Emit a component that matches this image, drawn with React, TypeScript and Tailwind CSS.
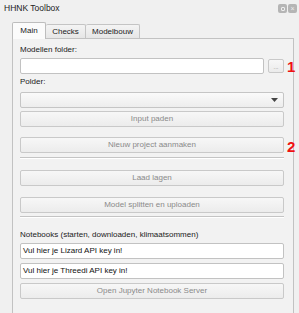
import React from "react";

const font = { fontFamily: '"Liberation Sans", Arial, sans-serif' };

function Btn({ label }: { label: string }) {
  return (
    <div className="h-[16px] flex items-center justify-center rounded-[2px] border border-[#c9c9c9] bg-gradient-to-b from-[#f7f7f7] to-[#ececec] text-[8px] text-[#8a8a8a]">
      {label}
    </div>
  );
}

function Input({ value }: { value?: string }) {
  return (
    <div className="h-[16px] flex items-center rounded-[2px] border border-[#c2c2c2] bg-white px-[2px] text-[8px] text-[#111]">
      {value}
    </div>
  );
}

export default function App() {
  return (
    <div className="relative w-[299px] h-[313px] overflow-hidden bg-[#f0f0f0] text-[#1a1a1a]" style={font}>
      {/* title bar */}
      <div className="flex h-[16px] items-center justify-between pl-[4px] pr-[2px] pt-[1px]">
        <span className="text-[8.5px] text-[#222]">HHNK Toolbox</span>
        <div className="flex gap-[1px]">
          <div className="w-[9px] h-[9px] rounded-[2px] bg-[#b5b5b5] flex items-center justify-center">
            <div className="w-[4px] h-[4px] border border-[#eee] rounded-[1px]" />
          </div>
          <div className="w-[9px] h-[9px] rounded-[2px] bg-[#b5b5b5] flex items-center justify-center text-[7px] leading-none text-[#eee]">
            ×
          </div>
        </div>
      </div>

      {/* tabs */}
      <div className="pl-[12px] pr-[5px] pt-[6px]">
        <div className="flex items-end h-[16px] text-[8px]">
          <div className="relative z-10 h-[17px] w-[34px] -mb-[1px] flex items-center justify-center rounded-t-[2px] border border-b-0 border-[#bdbdbd] bg-[#fbfbfb] pb-[1px]">
            Main
          </div>
          <div className="h-[14px] w-[40px] flex items-center justify-center rounded-t-[2px] border border-l-0 border-b-0 border-[#c4c4c4] bg-gradient-to-b from-[#f4f4f4] to-[#e6e6e6]">
            Checks
          </div>
          <div className="h-[14px] w-[54px] flex items-center justify-center rounded-t-[2px] border border-l-0 border-b-0 border-[#c4c4c4] bg-gradient-to-b from-[#f4f4f4] to-[#e6e6e6]">
            Modelbouw
          </div>
        </div>

        {/* panel */}
        <div className="h-[300px] border border-[#c2c2c2] bg-[#f2f2f2] pl-[7px] pr-[9px] pt-[5px] text-[8px]">
          <div className="h-[12px] leading-[12px]">Modellen folder:</div>
          <div className="mt-[2px] flex gap-[4px]">
            <div className="flex-1">
              <Input />
            </div>
            <div className="w-[16px] h-[14px] mt-[1px] flex items-end justify-center rounded-[2px] border border-[#c9c9c9] bg-gradient-to-b from-[#f7f7f7] to-[#ebebeb] text-[6px] leading-[9px] text-[#888]">
              ...
            </div>
          </div>
          <div className="mt-[2px] h-[12px] leading-[12px]">Polder:</div>
          <div className="mt-[4px] h-[16px] flex items-center justify-end rounded-[2px] border border-[#c5c5c5] bg-gradient-to-b from-[#fafafa] to-[#ededed] pr-[5px]">
            <svg width="7" height="4" viewBox="0 0 7 4">
              <path d="M0 0 L7 0 L3.5 4 Z" fill="#444" />
            </svg>
          </div>
          <div className="mt-[3px]">
            <Btn label="Input paden" />
          </div>
          <div className="mt-[10px]">
            <Btn label="Nieuw project aanmaken" />
          </div>
          <div className="mt-[4px] h-[2px] border-t border-[#c4c4c4] border-b border-b-white" />
          <div className="mt-[11px]">
            <Btn label="Laad lagen" />
          </div>
          <div className="mt-[11px]">
            <Btn label="Model splitten en uploaden" />
          </div>
          <div className="mt-[3px] h-[2px] border-t border-[#c4c4c4] border-b border-b-white" />
          <div className="mt-[11px] h-[12px] leading-[12px]">Notebooks (starten, downloaden, klimaatsommen)</div>
          <div className="mt-[2px]">
            <Input value="Vul hier je Lizard API key in!" />
          </div>
          <div className="mt-[4px]">
            <Input value="Vul hier je Threedi API key in!" />
          </div>
          <div className="mt-[4px]">
            <Btn label="Open Jupyter Notebook Server" />
          </div>
        </div>
      </div>

      {/* red annotations */}
      <div className="absolute left-[287px] top-[59px] text-[15px] font-bold leading-none text-[#ee1111]">1</div>
      <div className="absolute left-[287px] top-[139px] text-[15px] font-bold leading-none text-[#ee1111]">2</div>
    </div>
  );
}
